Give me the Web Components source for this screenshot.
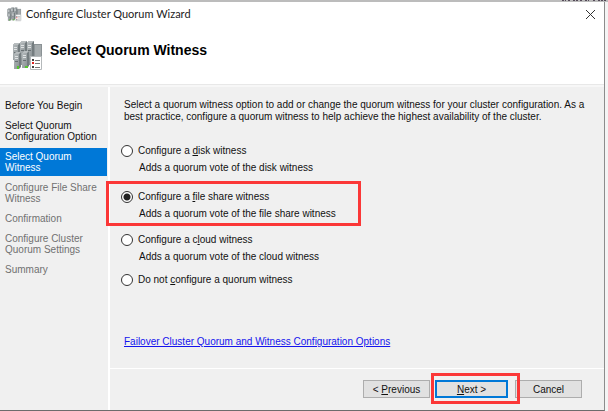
<!DOCTYPE html>
<html lang="en">
<head>
<meta charset="utf-8">
<title>Configure Cluster Quorum Wizard</title>
<style>
  html, body {
    height: 100%;
    margin: 0;
  }
  body {
    background: #f4f4f4;
    font: 10px/11px "Liberation Sans", Arial, sans-serif;
    color: #111;
    overflow: hidden;
  }
</style>
</head>
<body>
<wizard-window>
  <wizard-titlebar slot="titlebar">Configure Cluster Quorum Wizard</wizard-titlebar>
  <wizard-header slot="header">Select Quorum Witness</wizard-header>

  <wizard-steps slot="steps">
    <wizard-step>Before You Begin</wizard-step>
    <wizard-step>Select Quorum<br>Configuration Option</wizard-step>
    <wizard-step state="current">Select Quorum<br>Witness</wizard-step>
    <wizard-step state="pending">Configure File Share<br>Witness</wizard-step>
    <wizard-step state="pending">Confirmation</wizard-step>
    <wizard-step state="pending">Configure Cluster<br>Quorum Settings</wizard-step>
    <wizard-step state="pending">Summary</wizard-step>
  </wizard-steps>

  <witness-page>
    <span slot="intro">Select a quorum witness option to add or change the quorum witness for your cluster configuration. As a best practice, configure a quorum witness to help achieve the highest availability of the cluster.</span>
    <witness-options></witness-options>
    <wizard-link slot="help" href="#options">Failover Cluster Quorum and Witness Configuration Options</wizard-link>
  </witness-page>

  <wizard-button slot="actions">&lt; <u>P</u>revious</wizard-button>
  <wizard-button slot="actions" primary marked><u>N</u>ext &gt;</wizard-button>
  <wizard-button slot="actions">Cancel</wizard-button>
</wizard-window>

<script>
class WizardWindow extends HTMLElement {
  constructor() {
    super();
    this.attachShadow({ mode: "open" });
  }

  connectedCallback() {
    this.shadowRoot.innerHTML = `
      <style>
        :host {
          display: flex;
          flex-direction: column;
          box-sizing: border-box;
          height: 100vh;
          padding-right: 3px;
        }
        .backdrop {
          height: 2px;
          margin-right: -3px;
          background: #bcbcbc;
        }
        .backdrop svg {
          display: block;
          margin-left: auto;
        }
        .frame {
          flex: 1;
          display: flex;
          flex-direction: column;
          background: #fff;
          border-right: 1px solid #8c8c8c;
          border-bottom: 1px solid #6c6c6c;
        }
        .body {
          flex: 1;
          display: grid;
          grid-template-columns: 108px 1fr;
          background: #f0f0f0;
          border-top: 2px solid #f7f7f7;
        }
        .main {
          display: flex;
          flex-direction: column;
          border-left: 2px solid #fff;
        }
        .content {
          flex: 1;
          display: flex;
        }
        footer {
          display: flex;
          justify-content: flex-end;
          gap: 5px;
          padding: 11px 22px 12px;
          border-top: 1px solid #fff;
        }
      </style>

      <div class="backdrop">
        <svg width="48" height="2" viewBox="0 0 48 2"><path d="M2 .5h4M8 .5h3M13 .5h5M20 .5h2M25 .5h4M33 .5h3M38 .5h8" stroke="#544a58" stroke-dasharray="2 1"/></svg>
      </div>
      <div class="frame">
        <slot name="titlebar"></slot>
        <slot name="header"></slot>
        <div class="body">
          <slot name="steps"></slot>
          <div class="main">
            <div class="content"><slot></slot></div>
            <footer><slot name="actions"></slot></footer>
          </div>
        </div>
      </div>
    `;
  }
}

class ClusterIcon extends HTMLElement {
  constructor() {
    super();
    this.attachShadow({ mode: "open" });
  }

  connectedCallback() {
    const size = this.getAttribute("size") || 32;
    this.shadowRoot.innerHTML = `
      <style>
        :host { display: block; flex: none; }
        svg { display: block; }
      </style>

      <svg width="${size}" height="${size}" viewBox="0 0 32 32" aria-hidden="true">
        <defs>
          <linearGradient id="face" x2="1" y2="1">
            <stop offset="0" stop-color="#b4babc"/>
            <stop offset="1" stop-color="#8a9194"/>
          </linearGradient>
          <g id="server">
            <path d="M0 2 2 0h5v15l-2 2H0z" fill="#747c7f"/>
            <path d="M0 2 2 0h5L5 2z" fill="#b8bdbf"/>
            <path d="M0 2h5v15H0z" fill="url(#face)"/>
            <path d="M1 4.500h3M1 6.500h3" stroke="#dfe2e3"/>
            <path d="M1 9.500h3" stroke="#687073"/>
          </g>
        </defs>
        <path d="M22 4h8v24h-8z" fill="#8b9295"/>
        <path d="M23 5h6v12h-6z" fill="#a5abad"/>
        <path d="M3 5h20v20H3z" fill="#8d9497"/>
        <use href="#server" x="1" y="3"/>
        <use href="#server" x="8" y="1"/>
        <use href="#server" x="15" y="1"/>
        <use href="#server" x="2" y="12"/>
        <use href="#server" x="10" y="11"/>
        <path d="M5 26h2v3H5zM13 26h3v2h-3z" fill="#55c52e"/>
        <path d="M18.500 16.500h11v13h-11z" fill="#fff" stroke="#b5b9bb"/>
        <path d="M20 19h2v2h-2z" fill="#404040"/>
        <path d="M20 22h2v2h-2z" fill="#e02020"/>
        <path d="M20 26h2v2h-2z" fill="#404040"/>
        <path d="M23 20.500h5M23 23.500h5M23 27.500h5" stroke="#777"/>
      </svg>
    `;
  }
}

class WizardTitlebar extends HTMLElement {
  constructor() {
    super();
    this.attachShadow({ mode: "open" });
  }

  connectedCallback() {
    this.shadowRoot.innerHTML = `
      <style>
        :host {
          display: flex;
          align-items: center;
          gap: 4px;
          height: 24px;
          padding: 0 8px 0 7px;
          background: #fff;
          color: #222;
          font: 11px/16px Lato, "Open Sans", sans-serif;
        }
        .title { flex: 1; }
        button {
          display: flex;
          padding: 0;
          border: 0;
          background: none;
        }
      </style>

      <cluster-icon size="15"></cluster-icon>
      <span class="title"><slot></slot></span>
      <button type="button" aria-label="Close">
        <svg width="11" height="11" viewBox="0 0 11 11"><path d="M1 1l9 9M10 1l-9 9" stroke="#333" stroke-width="1"/></svg>
      </button>
    `;
  }
}

class WizardHeader extends HTMLElement {
  constructor() {
    super();
    this.attachShadow({ mode: "open" });
  }

  connectedCallback() {
    this.shadowRoot.innerHTML = `
      <style>
        :host {
          display: flex;
          gap: 6px;
          height: 44px;
          padding: 14px 12px 0;
          background: #fff;
          border-bottom: 1px solid #e8e8e8;
        }
        h1 {
          margin: 2px 0 0;
          color: #000;
          font-size: 14px;
          line-height: 16px;
        }
      </style>

      <cluster-icon size="32"></cluster-icon>
      <h1><slot></slot></h1>
    `;
  }
}

class WizardSteps extends HTMLElement {
  constructor() {
    super();
    this.attachShadow({ mode: "open" });
  }

  connectedCallback() {
    this.shadowRoot.innerHTML = `
      <style>
        :host {
          display: flex;
          flex-direction: column;
          gap: 3px;
          padding: 10px 1px 0 0;
        }
      </style>

      <slot></slot>
    `;
  }
}

class WizardStep extends HTMLElement {
  constructor() {
    super();
    this.attachShadow({ mode: "open" });
  }

  connectedCallback() {
    this.shadowRoot.innerHTML = `
      <style>
        :host {
          display: block;
          padding: 3px 0 3px 5px;
          white-space: nowrap;
        }
        :host([state="current"]) {
          background: #0078d7;
          color: #fff;
        }
        :host([state="pending"]) {
          color: #707070;
        }
      </style>

      <slot></slot>
    `;
  }
}

class WitnessPage extends HTMLElement {
  constructor() {
    super();
    this.attachShadow({ mode: "open" });
  }

  connectedCallback() {
    this.shadowRoot.innerHTML = `
      <style>
        :host {
          flex: 1;
          display: flex;
          flex-direction: column;
          padding: 12px 14px 20px;
        }
        p {
          margin: 0 0 19px;
          line-height: 12px;
        }
        .help { margin-top: auto; }
      </style>

      <p><slot name="intro"></slot></p>
      <slot></slot>
      <div class="help"><slot name="help"></slot></div>
    `;
  }
}

class WitnessOptions extends HTMLElement {
  constructor() {
    super();
    this.attachShadow({ mode: "open" });
  }

  connectedCallback() {
    const options = [
      { id: "disk", label: "Configure a <u>d</u>isk witness", note: "Adds a quorum vote of the disk witness" },
      { id: "share", label: "Configure a <u>f</u>ile share witness", note: "Adds a quorum vote of the file share witness", marked: true },
      { id: "cloud", label: "Configure a c<u>l</u>oud witness", note: "Adds a quorum vote of the cloud witness" },
      { id: "none", label: "Do not <u>c</u>onfigure a quorum witness" },
    ];

    this.shadowRoot.innerHTML = `
      <style>
        :host {
          display: flex;
          flex-direction: column;
          align-items: flex-start;
          gap: 6px;
          margin-left: -3px;
          line-height: 17px;
        }
        .option {
          position: relative;
        }
        .marked {
          padding: 6px 0 3px;
        }
        .marked::after {
          content: "";
          position: absolute;
          inset: -1px -25px -1px -15px;
          border: 3px solid #fb3737;
          pointer-events: none;
        }
        label {
          display: flex;
          align-items: center;
          gap: 5px;
        }
        input {
          appearance: none;
          box-sizing: border-box;
          width: 12px;
          height: 12px;
          margin: 0;
          border: 1px solid #333;
          border-radius: 50%;
          background: #fff;
        }
        input:checked {
          background: radial-gradient(circle, #222 3px, #fff 4px);
        }
        .note {
          padding-left: 18px;
        }
      </style>

      ${options.map((o) => `
        <div class="option ${o.marked ? "marked" : ""}">
          <label for="${o.id}">
            <input type="radio" name="witness" id="${o.id}" ${o.marked ? "checked" : ""}>
            <span>${o.label}</span>
          </label>
          ${o.note ? `<div class="note">${o.note}</div>` : ""}
        </div>
      `).join("")}
    `;
  }
}

class WizardLink extends HTMLElement {
  constructor() {
    super();
    this.attachShadow({ mode: "open" });
  }

  connectedCallback() {
    this.shadowRoot.innerHTML = `
      <style>
        :host { display: block; line-height: 12px; }
        a { color: #1414ee; }
      </style>

      <a href="${this.getAttribute("href")}"><slot></slot></a>
    `;
  }
}

class WizardButton extends HTMLElement {
  constructor() {
    super();
    this.attachShadow({ mode: "open" });
  }

  connectedCallback() {
    this.shadowRoot.innerHTML = `
      <style>
        :host {
          display: block;
          position: relative;
        }
        :host([marked]) {
          z-index: 1;
          margin-right: 2px;
        }
        button {
          box-sizing: border-box;
          width: 67px;
          height: 18px;
          padding: 0;
          display: block;
          border: 1px solid #adadad;
          background: #e1e1e1;
          color: inherit;
          font: inherit;
        }
        :host([primary]) button {
          width: 73px;
          border: 2px solid #0078d7;
        }
        :host([marked])::after {
          content: "";
          position: absolute;
          inset: -7px -12px -6px -4px;
          border: 3px solid #fb3737;
          pointer-events: none;
        }
      </style>

      <button type="button"><slot></slot></button>
    `;
  }
}

customElements.define("cluster-icon", ClusterIcon);
customElements.define("wizard-window", WizardWindow);
customElements.define("wizard-titlebar", WizardTitlebar);
customElements.define("wizard-header", WizardHeader);
customElements.define("wizard-steps", WizardSteps);
customElements.define("wizard-step", WizardStep);
customElements.define("witness-page", WitnessPage);
customElements.define("witness-options", WitnessOptions);
customElements.define("wizard-link", WizardLink);
customElements.define("wizard-button", WizardButton);
</script>
</body>
</html>
